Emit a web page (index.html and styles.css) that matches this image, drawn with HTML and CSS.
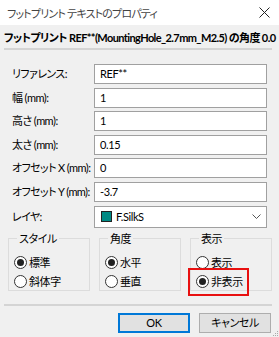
FILE: index.html
```html
<!DOCTYPE html>
<html lang="ja">
<head>
    <meta charset="UTF-8">
    <title>フットプリント テキストのプロパティ</title>
    <link rel="stylesheet" href="styles.css">
</head>
<body>
    <div class="titlebar">
        <span class="title">フットプリント テキストのプロパティ</span>
        <svg class="close" width="11" height="11" viewBox="0 0 11 11"><path d="M0.5 0.5 L10.5 10.5 M10.5 0.5 L0.5 10.5" stroke="#222" stroke-width="1" fill="none"/></svg>
    </div>
    <div class="dialog">
        <div class="heading">フットプリント REF**(MountingHole_2.7mm_M2.5) の角度 0.0</div>
        <div class="rule"></div>

        <div class="form">
            <label>リファレンス:</label><div class="field">REF**</div>
            <label>幅 (mm):</label><div class="field">1</div>
            <label>高さ (mm):</label><div class="field">1</div>
            <label>太さ (mm):</label><div class="field">0.15</div>
            <label>オフセット X (mm):</label><div class="field">0</div>
            <label>オフセット Y (mm):</label><div class="field">-3.7</div>
            <label>レイヤ:</label>
            <div class="select">
                <span class="swatch"></span>
                <span class="select-text">F.SilkS</span>
                <svg class="chevron" width="9" height="6" viewBox="0 0 9 6"><path d="M0.5 0.5 L4.5 4.5 L8.5 0.5" stroke="#555" fill="none"/></svg>
            </div>
        </div>

        <div class="groups">
            <fieldset class="group">
                <legend>スタイル</legend>
                <div class="option"><span class="radio checked"></span>標準</div>
                <div class="option"><span class="radio"></span>斜体字</div>
            </fieldset>
            <fieldset class="group">
                <legend>角度</legend>
                <div class="option"><span class="radio checked"></span>水平</div>
                <div class="option"><span class="radio"></span>垂直</div>
            </fieldset>
            <fieldset class="group">
                <legend>表示</legend>
                <div class="option"><span class="radio"></span>表示</div>
                <div class="option highlight"><span class="radio checked"></span>非表示</div>
            </fieldset>
        </div>

        <div class="rule bottom-rule"></div>
        <div class="buttons">
            <button class="btn default">OK</button>
            <button class="btn">キャンセル</button>
        </div>
    </div>
    <svg class="grip" width="7" height="7" viewBox="0 0 7 7">
        <rect x="5" y="1" width="1" height="1" fill="#aaa"/>
        <rect x="3" y="3" width="1" height="1" fill="#aaa"/>
        <rect x="5" y="3" width="1" height="1" fill="#aaa"/>
        <rect x="1" y="5" width="1" height="1" fill="#aaa"/>
        <rect x="3" y="5" width="1" height="1" fill="#aaa"/>
        <rect x="5" y="5" width="1" height="1" fill="#aaa"/>
    </svg>
</body>
</html>
```

FILE: styles.css
```css
body {
    margin: 0;
    width: 279px;
    height: 337px;
    overflow: hidden;
    position: relative;
    background-color: #f0f0f0;
    font-family: Lato, "Noto Sans CJK JP", sans-serif;
    font-feature-settings: "palt";
    font-size: 11px;
    letter-spacing: -0.4px;
    color: #000;
}
.titlebar {
    height: 25px;
    background-color: #fff;
    display: flex;
    align-items: center;
    justify-content: space-between;
    padding: 0 9px 0 7px;
}
.title {
    color: #444;
    letter-spacing: -0.8px;
}
.dialog {
    padding: 0 4px;
}
.heading {
    padding-top: 5px;
    line-height: 16px;
    font-weight: bold;
    white-space: nowrap;
    letter-spacing: -0.6px;
}
.rule {
    margin-top: 2px;
    height: 2px;
    background-color: #d4d4d4;
    margin-right: 3px;
}
.form {
    margin-top: 14px;
    display: grid;
    grid-template-columns: 82px 173px;
    row-gap: 3.6px;
    padding-left: 8px;
    align-items: center;
}
.form label {
    line-height: 16px;
    white-space: nowrap;
    letter-spacing: -0.6px;
}
.field {
    height: 20px;
    box-sizing: border-box;
    border: 1px solid #a0a0a0;
    background-color: #fff;
    padding-left: 5px;
    line-height: 18px;
}
.select {
    height: 22px;
    box-sizing: border-box;
    border: 1px solid #a0a0a0;
    background-color: #fff;
    display: flex;
    align-items: center;
    padding-left: 6px;
}
.swatch {
    width: 11px;
    height: 11px;
    box-sizing: border-box;
    background-color: #008a84;
    border: 1px solid #222;
}
.select-text {
    margin-left: 4px;
    flex: 1;
}
.chevron {
    margin-right: 5px;
}
.groups {
    margin-top: 4px;
    display: flex;
    gap: 9px;
    padding-left: 4px;
}
.group {
    margin: 0;
    width: 82px;
    height: 59px;
    box-sizing: border-box;
    border: 1px solid #dcdcdc;
    padding: 7px 0 0 5px;
}
.group legend {
    padding: 0 2px;
    margin-left: 3px;
    line-height: 14px;
}
.option {
    display: flex;
    align-items: center;
    height: 19px;
    width: max-content;
    position: relative;
}
.radio {
    width: 13px;
    height: 13px;
    box-sizing: border-box;
    border: 1px solid #333;
    border-radius: 50%;
    background-color: #fff;
    margin-right: 2px;
    display: flex;
    align-items: center;
    justify-content: center;
}
.radio.checked::after {
    content: "";
    width: 7px;
    height: 7px;
    border-radius: 50%;
    background-color: #222;
}
.highlight::before {
    content: "";
    position: absolute;
    left: -8px;
    top: -4px;
    width: 61px;
    height: 28px;
    box-sizing: border-box;
    border: 2px solid #e81010;
}
.bottom-rule {
    margin-top: 13px;
}
.buttons {
    margin-top: 7px;
    display: flex;
    justify-content: flex-end;
    gap: 9px;
    padding-right: 4px;
}
.btn {
    width: 72px;
    height: 20px;
    box-sizing: border-box;
    border: 1px solid #adadad;
    background-color: #e1e1e1;
    font-family: inherit;
    font-feature-settings: "palt";
    font-size: 11px;
    letter-spacing: -0.4px;
    padding: 0;
    line-height: 16px;
}
.btn.default {
    border: 2px solid #0078d7;
}
.grip {
    position: absolute;
    right: 0;
    bottom: 0;
}
```
